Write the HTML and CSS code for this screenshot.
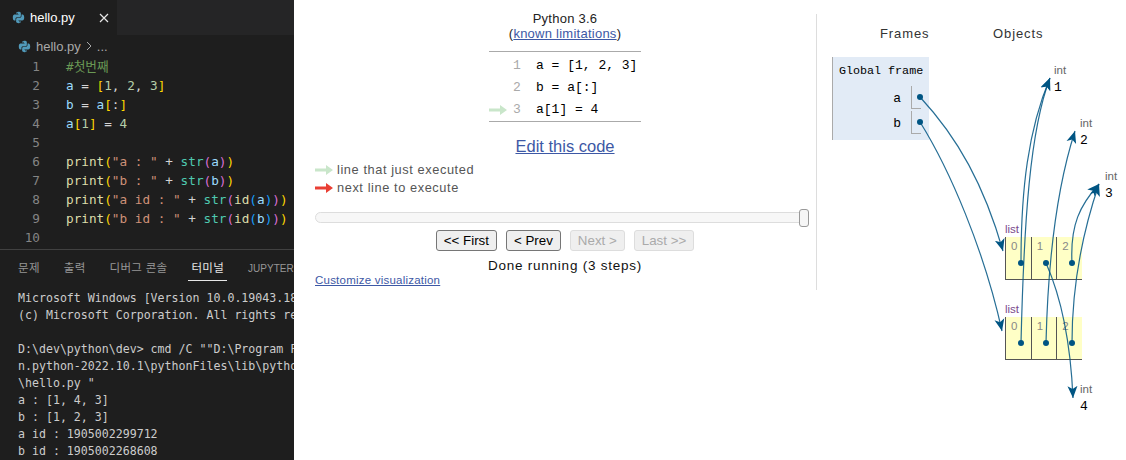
FILE: index.html
```html
<!DOCTYPE html>
<html lang="ko">
<head>
<meta charset="utf-8">
<title>hello.py</title>
<link rel="stylesheet" href="styles.css">
</head>
<body>
<svg class="defs" width="0" height="0" aria-hidden="true">
  <defs>
    <symbol id="py" viewBox="0 0 16 16">
      <path fill="#519aba" d="M7.9 1C5.2 1 5.4 2.2 5.4 2.2v1.6h2.6v.5H3.4S1 4 1 7.9c0 3.800 2 3.700 2 3.700h1.300V9.800s-.1-2.100 2.100-2.100h2.500s2 0 2-1.900V3S11.200 1 7.900 1zM6.500 2.100a.7.700 0 1 1 0 1.400.7.700 0 0 1 0-1.400z"/>
      <path fill="#519aba" d="M8.100 15c2.700 0 2.500-1.200 2.500-1.200v-1.600H8v-.5h4.600S15 12 15 8.100c0-3.800-2-3.700-2-3.700h-1.300v1.800s.1 2.100-2.100 2.100H7.100s-2 0-2 1.900V13s-.3 2 3 2zm1.400-1.100a.7.700 0 1 1 0-1.400.7.700 0 0 1 0 1.400z"/>
    </symbol>
    <marker id="head" markerUnits="userSpaceOnUse" markerWidth="14" markerHeight="12" refX="12" refY="6" orient="auto">
      <path d="M0 1 L12 6 L0 11 L3 6 Z" fill="#005583"/>
    </marker>
    <symbol id="arrow" viewBox="0 0 18 10">
      <path d="M0 3.500h11V0l7 5-7 5V6.500H0z"/>
    </symbol>
  </defs>
</svg>

<section class="editor">
  <div class="tabbar">
    <div class="tab">
      <svg class="file-icon"><use href="#py"/></svg>
      <span class="tab-name">hello.py</span>
      <svg class="close" viewBox="0 0 10 10"><path d="M1 1l8 8M9 1l-8 8"/></svg>
    </div>
  </div>
  <div class="crumbs">
    <svg class="file-icon"><use href="#py"/></svg>
    <span>hello.py</span>
    <svg class="chev" viewBox="0 0 6 10"><path d="M1 1l4 4-4 4"/></svg>
    <span>...</span>
  </div>
  <div class="code">
    <div class="line"><span class="no">1</span><span class="c">#첫번째</span></div>
    <div class="line"><span class="no">2</span><span><span class="v">a</span> <span class="o">=</span> <span class="g">[</span><span class="n">1</span><span class="o">,</span> <span class="n">2</span><span class="o">,</span> <span class="n">3</span><span class="g">]</span></span></div>
    <div class="line"><span class="no">3</span><span><span class="v">b</span> <span class="o">=</span> <span class="v">a</span><span class="g">[</span><span class="o">:</span><span class="g">]</span></span></div>
    <div class="line"><span class="no">4</span><span><span class="v">a</span><span class="g">[</span><span class="n">1</span><span class="g">]</span> <span class="o">=</span> <span class="n">4</span></span></div>
    <div class="line"><span class="no">5</span></div>
    <div class="line"><span class="no">6</span><span><span class="f">print</span><span class="g">(</span><span class="s">"a : "</span> <span class="o">+</span> <span class="b">str</span><span class="p">(</span><span class="v">a</span><span class="p">)</span><span class="g">)</span></span></div>
    <div class="line"><span class="no">7</span><span><span class="f">print</span><span class="g">(</span><span class="s">"b : "</span> <span class="o">+</span> <span class="b">str</span><span class="p">(</span><span class="v">b</span><span class="p">)</span><span class="g">)</span></span></div>
    <div class="line"><span class="no">8</span><span><span class="f">print</span><span class="g">(</span><span class="s">"a id : "</span> <span class="o">+</span> <span class="b">str</span><span class="p">(</span><span class="f">id</span><span class="u">(</span><span class="v">a</span><span class="u">)</span><span class="p">)</span><span class="g">)</span></span></div>
    <div class="line"><span class="no">9</span><span><span class="f">print</span><span class="g">(</span><span class="s">"b id : "</span> <span class="o">+</span> <span class="b">str</span><span class="p">(</span><span class="f">id</span><span class="u">(</span><span class="v">b</span><span class="u">)</span><span class="p">)</span><span class="g">)</span></span></div>
    <div class="line"><span class="no">10</span></div>
  </div>
  <div class="panel">
    <div class="panel-tabs">
      <span>문제</span><span>출력</span><span>디버그 콘솔</span><span class="active">터미널</span><span class="latin">JUPYTER</span>
    </div>
<pre class="terminal">Microsoft Windows [Version 10.0.19043.1889]
(c) Microsoft Corporation. All rights reserved.

D:\dev\python\dev&gt; cmd /C ""D:\Program Files\Python
n.python-2022.10.1\pythonFiles\lib\python\debugpy
\hello.py "
a : [1, 4, 3]
b : [1, 2, 3]
a id : 1905002299712
b id : 1905002268608</pre>
  </div>
</section>

<section class="tutor">
  <div class="controls">
    <div class="lang">Python 3.6<br>(<a href="#">known limitations</a>)</div>
    <div class="listing">
      <div class="row"><span class="gutter"></span><span class="ln">1</span><span>a = [1, 2, 3]</span></div>
      <div class="row"><span class="gutter"></span><span class="ln">2</span><span>b = a[:]</span></div>
      <div class="row"><span class="gutter"><svg class="arrow green"><use href="#arrow"/></svg></span><span class="ln">3</span><span>a[1] = 4</span></div>
    </div>
    <a class="edit" href="#">Edit this code</a>
    <div class="legend">
      <div class="legend-row"><svg class="arrow green"><use href="#arrow"/></svg>line that just executed</div>
      <div class="legend-row"><svg class="arrow red"><use href="#arrow"/></svg>next line to execute</div>
    </div>
    <div class="slider"><span class="handle"></span></div>
    <div class="buttons">
      <button type="button">&lt;&lt; First</button>
      <button type="button">&lt; Prev</button>
      <button type="button" disabled>Next &gt;</button>
      <button type="button" disabled>Last &gt;&gt;</button>
    </div>
    <div class="status">Done running (3 steps)</div>
    <a class="customize" href="#">Customize visualization</a>
  </div>

  <div class="viz">
    <div class="viz-heads"><span class="h-frames">Frames</span><span class="h-objects">Objects</span></div>
    <div class="frame">
      <div class="frame-title">Global frame</div>
      <div class="var"><span class="var-name">a</span><span class="var-slot"></span></div>
      <div class="var"><span class="var-name">b</span><span class="var-slot"></span></div>
    </div>

    <div class="obj int1"><span class="type">int</span><span class="val">1</span></div>
    <div class="obj int2"><span class="type">int</span><span class="val">2</span></div>
    <div class="obj int3"><span class="type">int</span><span class="val">3</span></div>
    <div class="obj int4"><span class="type">int</span><span class="val">4</span></div>

    <div class="obj list1"><span class="type">list</span>
      <div class="cells"><span>0</span><span>1</span><span>2</span></div>
    </div>
    <div class="obj list2"><span class="type">list</span>
      <div class="cells"><span>0</span><span>1</span><span>2</span></div>
    </div>

    <svg class="wires" viewBox="0 0 1126 460">
      <g class="dots">
        <circle cx="920" cy="97" r="3"/><circle cx="920" cy="122" r="3"/>
        <circle cx="1021" cy="263" r="3"/><circle cx="1046" cy="263" r="3"/><circle cx="1072" cy="263" r="3"/>
        <circle cx="1021" cy="343" r="3"/><circle cx="1046" cy="343" r="3"/><circle cx="1072" cy="343" r="3"/>
      </g>
      <g class="lines">
        <path d="M920 97C958 138 984 185 1003 251"/>
        <path d="M920 122C950 170 984 250 1002 331"/>
        <path d="M1021 263C1021 190 1028 130 1050 78"/>
        <path d="M1021 343C1024 220 1030 130 1050 78"/>
        <path d="M1046 343C1048 260 1056 190 1075 131"/>
        <path d="M1072 263C1070 225 1080 205 1099 184"/>
        <path d="M1072 343C1072 280 1085 225 1099 184"/>
        <path d="M1046 263C1058 290 1070 330 1073 398"/>
      </g>
    </svg>
  </div>
</section>
</body>
</html>
```

FILE: styles.css
```css
* { box-sizing: border-box; }
html, body { margin: 0; height: 100%; }
body {
  display: flex;
  width: 1126px;
  height: 460px;
  overflow: hidden;
  background: #fff;
  font-family: "Liberation Sans", "Noto Sans CJK KR", sans-serif;
}
.defs { position: absolute; }

/* editor */
.editor {
  width: 294px;
  flex: none;
  display: flex;
  flex-direction: column;
  background: #1e1e1e;
  overflow: hidden;
}
.tabbar { height: 35px; flex: none; background: #252526; display: flex; }
.tab {
  width: 117px;
  background: #1e1e1e;
  display: flex;
  align-items: center;
  padding-left: 12px;
  gap: 5px;
  color: #fff;
  font-size: 13px;
}
.tab-name { width: 64px; }
.file-icon { width: 13px; height: 13px; flex: none; }
.close { width: 10px; height: 10px; fill: none; stroke: #e6e6e6; stroke-width: 1.2; }
.crumbs {
  height: 22px;
  flex: none;
  padding: 0 0 0 18px;
  display: flex;
  align-items: center;
  gap: 5px;
  color: #a9a9a9;
  font-size: 13px;
}
.chev { width: 6px; height: 10px; fill: none; stroke: #a9a9a9; stroke-width: 1; }
.code {
  height: 192px;
  flex: none;
  font: 12.7px/19px "DejaVu Sans Mono", "Noto Sans CJK KR", monospace;
  color: #d4d4d4;
}
.line { display: flex; height: 19px; white-space: pre; }
.no { width: 40px; margin-right: 26px; text-align: right; color: #858585; flex: none; }
.c { color: #6a9955; }
.v { color: #9cdcfe; }
.o { color: #d4d4d4; }
.g { color: #ffd700; }
.p { color: #da70d6; }
.u { color: #179fff; }
.n { color: #b5cea8; }
.f { color: #dcdcaa; }
.s { color: #ce9178; }
.b { color: #4ec9b0; }

.panel { flex: 1; border-top: 1px solid #414141; padding-left: 18px; min-height: 0; }
.panel-tabs {
  height: 38px;
  display: flex;
  gap: 24px;
  align-items: flex-start;
  font-size: 11.5px;
  letter-spacing: .3px;
  color: #969696;
  white-space: nowrap;
}
.panel-tabs span { height: 31px; line-height: 37px; }
.panel-tabs .active { color: #e7e7e7; border-bottom: 1px solid #e7e7e7; padding: 0 3px; margin: 0 -3px; }
.panel-tabs .latin { font-size: 10px; letter-spacing: 0; }
.terminal {
  margin: 2px 0 0;
  font: 11.6px/17px "DejaVu Sans Mono", monospace;
  color: #cccccc;
  white-space: pre;
}

/* tutor */
.tutor { flex: 1; position: relative; display: flex; background: #fff; }
.controls {
  width: 523px;
  height: 276px;
  margin-top: 14px;
  padding-left: 21px;
  border-right: 1px solid #ddd;
  flex: none;
  display: flex;
  flex-direction: column;
  align-items: flex-start;
}
.controls a { color: #3d58a5; }
.lang {
  width: 500px;
  margin-top: -3px;
  text-align: center;
  font-size: 13px;
  line-height: 15px;
  letter-spacing: .25px;
  color: #222;
  margin-bottom: 10px;
}
.listing {
  width: 152px;
  margin-left: 174px;
  height: 71px;
  border-top: 1px solid #aaa;
  border-bottom: 1px solid #aaa;
  padding-top: 3px;
  font: 13px/22px "Liberation Mono", monospace;
  color: #000;
}
.row { display: flex; white-space: pre; }
.gutter { width: 20px; display: flex; align-items: center; }
.ln { width: 27px; color: #aaa; padding-left: 4px; }
.arrow { width: 18px; height: 10px; flex: none; }
.green { fill: #c9e6ca; }
.red { fill: #e93f34; }
.edit { width: 500px; text-align: center; font-size: 16.5px; line-height: 18px; margin-top: 15px; }
.legend { margin-top: 6px; font-size: 12.8px; line-height: 18px; color: #555; letter-spacing: .58px; }
.legend-row { display: flex; align-items: center; gap: 4px; }
.slider {
  position: relative;
  width: 492px;
  height: 11px;
  margin-top: 15px;
  background: #f7f7f7;
  border: 1px solid #ddd;
  border-radius: 6px;
}
.handle {
  position: absolute;
  right: -3px;
  top: -4px;
  width: 10px;
  height: 18px;
  background: #f6f6f6;
  border: 1px solid #999;
  border-radius: 3px;
}
.buttons {
  width: 500px;
  display: flex;
  justify-content: center;
  gap: 9px;
  margin-top: 7px;
}
.buttons button {
  height: 21px;
  padding: 0 7px;
  font: 13.333px "Liberation Sans", sans-serif;
  color: #000;
  background: #efefef;
  border: 1px solid #767676;
  border-radius: 3px;
}
.buttons button:disabled { color: #aaa; background: #efefef; border-color: #ddd; }
.status { width: 500px; text-align: center; font-size: 13.5px; line-height: 16px; margin-top: 7px; color: #111; letter-spacing: .75px; }
.customize { font-size: 11.5px; line-height: 14px; margin-top: -1px; letter-spacing: .22px; }

/* diagram: heap objects sit at free positions on the canvas */
.viz { flex: 1; position: relative; }
.h-frames, .h-objects { position: absolute; top: 26px; font-size: 13px; line-height: 16px; color: #333; letter-spacing: .9px; }
.h-frames { left: 63px; }
.h-objects { left: 176px; }
.frame {
  position: absolute;
  left: 15px;
  top: 57px;
  width: 97px;
  height: 83px;
  background: #e2ebf6;
  border-left: 1px solid #aaa;
  padding-top: 6px;
}
.frame-title { font: 11.7px/16px "Liberation Mono", monospace; padding-left: 6px; color: #000; }
.var { display: flex; height: 25px; justify-content: flex-end; padding-right: 8px; }
.frame-title + .var { margin-top: 7px; }
.var-name { font: 13px/25px "Liberation Mono", monospace; margin-right: 10px; }
.var-slot { width: 10px; height: 23px; border-left: 1px solid #aaa; border-bottom: 1px solid #aaa; }
.obj { position: absolute; display: flex; flex-direction: column; }
.type { font-size: 11.5px; line-height: 14px; color: #666; }
.val { font: 13px/17px "Liberation Mono", monospace; color: #000; margin-top: 2px; }
.int1 { left: 237px; top: 63px; }
.int2 { left: 263px; top: 116px; }
.int3 { left: 288px; top: 169px; }
.int4 { left: 263px; top: 382px; }
.list1, .list2 { left: 188px; width: 77px; }
.list1 { top: 222px; }
.list2 { top: 302px; }
.list1 .type, .list2 .type { color: #7a4a8c; line-height: 15px; }
.cells {
  display: grid;
  grid-template-columns: repeat(3, 1fr);
  height: 43px;
  background: #ffffc6;
  border-bottom: 1px solid #555;
}
.cells span {
  border-left: 1px solid #555;
  padding-left: 5px;
  font-size: 11.5px;
  line-height: 18px;
  color: #888;
}
.wires { position: absolute; left: -817px; top: 0; width: 1126px; height: 460px; pointer-events: none; }
.dots { fill: #005583; }
.lines { fill: none; stroke: #005583; stroke-width: 1.2px; stroke-opacity: .85; marker-end: url(#head); }
```
